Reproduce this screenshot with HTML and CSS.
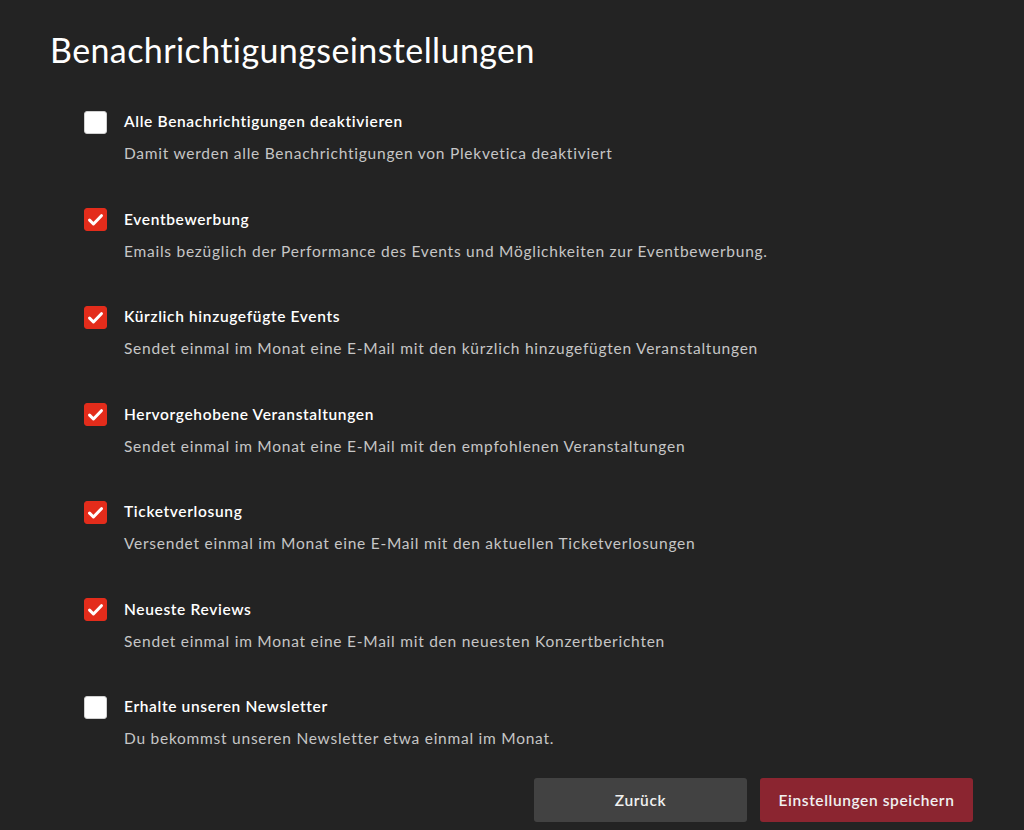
FILE: index.html
```html
<!DOCTYPE html>
<html lang="de">
<head>
<meta charset="utf-8">
<title>Benachrichtigungseinstellungen</title>
<link rel="stylesheet" href="styles.css">
</head>
<body>
<main class="page">
  <h1 class="title">Benachrichtigungseinstellungen</h1>
  <ul class="options">
    <li class="option">
      <span class="box"></span>
      <div class="text">
        <div class="label">Alle Benachrichtigungen deaktivieren</div>
        <div class="desc">Damit werden alle Benachrichtigungen von Plekvetica deaktiviert</div>
      </div>
    </li>
    <li class="option">
      <span class="box checked"><svg class="tick" viewBox="0 0 24 24"><path d="M4.5 12.8l4.9 4.9L19.5 7.2" fill="none" stroke="#fff" stroke-width="3.8" stroke-linecap="round" stroke-linejoin="round"/></svg></span>
      <div class="text">
        <div class="label">Eventbewerbung</div>
        <div class="desc">Emails bezüglich der Performance des Events und Möglichkeiten zur Eventbewerbung.</div>
      </div>
    </li>
    <li class="option">
      <span class="box checked"><svg class="tick" viewBox="0 0 24 24"><path d="M4.5 12.8l4.9 4.9L19.5 7.2" fill="none" stroke="#fff" stroke-width="3.8" stroke-linecap="round" stroke-linejoin="round"/></svg></span>
      <div class="text">
        <div class="label">Kürzlich hinzugefügte Events</div>
        <div class="desc">Sendet einmal im Monat eine E-Mail mit den kürzlich hinzugefügten Veranstaltungen</div>
      </div>
    </li>
    <li class="option">
      <span class="box checked"><svg class="tick" viewBox="0 0 24 24"><path d="M4.5 12.8l4.9 4.9L19.5 7.2" fill="none" stroke="#fff" stroke-width="3.8" stroke-linecap="round" stroke-linejoin="round"/></svg></span>
      <div class="text">
        <div class="label">Hervorgehobene Veranstaltungen</div>
        <div class="desc">Sendet einmal im Monat eine E-Mail mit den empfohlenen Veranstaltungen</div>
      </div>
    </li>
    <li class="option">
      <span class="box checked"><svg class="tick" viewBox="0 0 24 24"><path d="M4.5 12.8l4.9 4.9L19.5 7.2" fill="none" stroke="#fff" stroke-width="3.8" stroke-linecap="round" stroke-linejoin="round"/></svg></span>
      <div class="text">
        <div class="label">Ticketverlosung</div>
        <div class="desc">Versendet einmal im Monat eine E-Mail mit den aktuellen Ticketverlosungen</div>
      </div>
    </li>
    <li class="option">
      <span class="box checked"><svg class="tick" viewBox="0 0 24 24"><path d="M4.5 12.8l4.9 4.9L19.5 7.2" fill="none" stroke="#fff" stroke-width="3.8" stroke-linecap="round" stroke-linejoin="round"/></svg></span>
      <div class="text">
        <div class="label">Neueste Reviews</div>
        <div class="desc">Sendet einmal im Monat eine E-Mail mit den neuesten Konzertberichten</div>
      </div>
    </li>
    <li class="option">
      <span class="box"></span>
      <div class="text">
        <div class="label">Erhalte unseren Newsletter</div>
        <div class="desc">Du bekommst unseren Newsletter etwa einmal im Monat.</div>
      </div>
    </li>
  </ul>
  <div class="actions">
    <button class="btn btn-back">Zurück</button>
    <button class="btn btn-save">Einstellungen speichern</button>
  </div>
</main>
</body>
</html>
```

FILE: styles.css
```css
html, body {
  margin: 0;
  padding: 0;
  background: #232323;
}
body {
  font-family: Lato, "Noto Sans", sans-serif;
  color: #ffffff;
}
.page {
  padding: 28px 51px 0 50px;
}
.title {
  margin: 0;
  font-size: 34px;
  line-height: 44px;
  font-weight: 400;
  letter-spacing: 0.4px;
  color: #ffffff;
}
.options {
  list-style: none;
  margin: 38px 0 0 0;
  padding: 0 0 0 34px;
  display: flex;
  flex-direction: column;
  gap: 43.5px;
}
.option {
  display: flex;
  align-items: flex-start;
  gap: 17px;
}
.box {
  flex: none;
  width: 21px;
  height: 21px;
  margin-top: 0.5px;
  background: #ffffff;
  border: 1px solid #d0d0d0;
  border-radius: 3px;
  display: flex;
  align-items: center;
  justify-content: center;
}
.box.checked {
  background: #e32c1b;
  border-color: #e32c1b;
}
.tick {
  width: 19px;
  height: 19px;
}
.label {
  font-size: 15.5px;
  line-height: 22px;
  font-weight: 600;
  letter-spacing: 0.65px;
  color: #ffffff;
}
.desc {
  margin-top: 10px;
  font-size: 15.5px;
  line-height: 22px;
  color: #c6c6c6;
  letter-spacing: 0.75px;
}
.actions {
  margin-top: 29px;
  display: flex;
  justify-content: flex-end;
  gap: 13px;
}
.btn {
  width: 213px;
  height: 44px;
  border: none;
  border-radius: 3px;
  font-family: inherit;
  font-size: 15.5px;
  font-weight: 600;
  letter-spacing: 0.6px;
  color: #f0f0f0;
  cursor: pointer;
}
.btn-back {
  background: #424242;
}
.btn-save {
  background: #8b2530;
}
```
